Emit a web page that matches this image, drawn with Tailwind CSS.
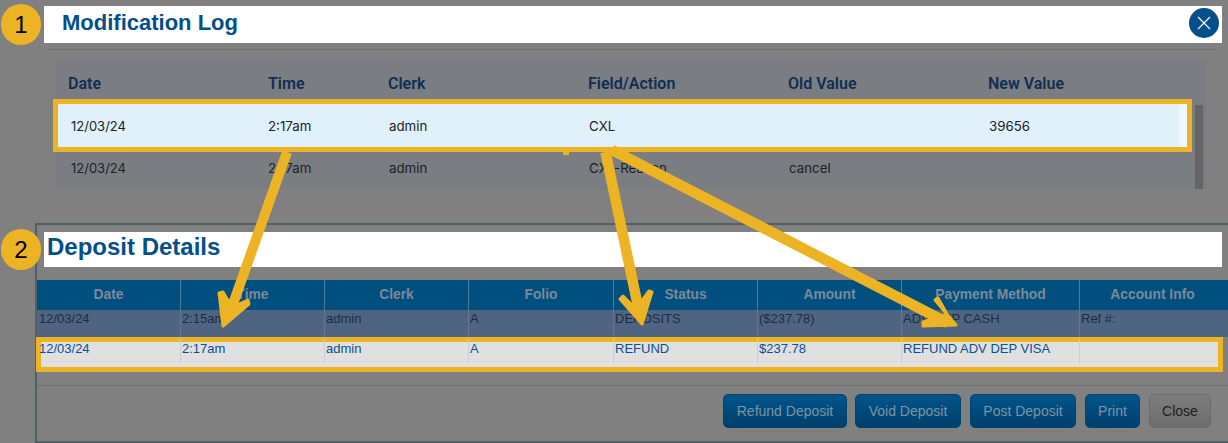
<!DOCTYPE html>
<html><head><meta charset="utf-8"><script src="https://cdn.jsdelivr.net/npm/@tailwindcss/browser@4"></script></head>
<body class="m-0">
<div class="relative w-[1228px] h-[443px] overflow-hidden bg-[#808080] font-['Liberation_Sans',Arial,sans-serif]">
  <!-- Modification log -->
  <div class="pt-[6px] pl-[44px] pr-[6px]">
    <div class="h-[37px] bg-white pl-[18px] flex items-center">
      <h1 class="text-[22px] leading-[32px] font-bold text-[#024f8a] pb-[4px]">Modification Log</h1>
    </div>
  </div>
  <div class="mt-[6px] ml-[47px] mr-[11px] h-px bg-[#6e6e6e]"></div>
  <div class="mt-[9px] ml-[57px] w-[1149px] h-[130px] bg-[#7a7e82] flex font-['Inter',sans-serif]">
    <div class="w-[1138px] shrink-0">
      <div class="h-[40px] pl-[11px] grid grid-cols-[200px_120px_200px_200px_200px_1fr] items-center pt-[10px] text-[16px] font-semibold text-[#0f2f52] font-['Roboto',sans-serif]">
        <span>Date</span><span>Time</span><span>Clerk</span><span>Field/Action</span><span>Old Value</span><span>New Value</span>
      </div>
      <div class="-ml-[4px] w-[1139px] h-[53px] border-[5px] border-[#ecb424] bg-[#e0f1fc] flex">
        <div class="w-[1121px] pl-[13px] pt-[2px] grid grid-cols-[197px_121px_200px_200px_200px_1fr] items-center text-[13.3px] text-[#1d2126]">
          <span class="text-[13px]">12/03/24</span><span>2:17am</span><span>admin</span><span>CXL</span><span></span><span>39656</span>
        </div>
        <div class="flex-1 bg-[#f0f8fd]"></div>
      </div>
      <div class="h-[37px] pl-[14px] pb-[3px] grid grid-cols-[197px_121px_200px_200px_200px_1fr] items-center text-[13.3px] text-[#1d2126]">
        <span class="text-[13px]">12/03/24</span><span>2:17am</span><span>admin</span><span>CXL-Reason</span><span>cancel</span><span></span>
      </div>
    </div>
    <div class="mt-[46px] w-[8px] h-[84px] bg-[#656565]"></div>
  </div>

  <!-- Deposit details -->
  <div class="mt-[34px] ml-[35px] w-[1200px] h-[220px] border-2 border-[#4f6068]">
    <div class="mt-[7px] ml-[7px] w-[1178px] h-[35px] bg-white pl-[3px] flex items-center">
      <h2 class="text-[24px] leading-[32px] font-bold text-[#024f8a] pb-[6px]">Deposit Details</h2>
    </div>
    <div class="mt-[13px] text-[13px]">
      <div class="h-[30px] bg-[#004f7f] text-[#7b8a99] text-[13.8px] font-bold grid grid-cols-[144px_144px_144px_145px_144px_144px_178px_145px_4px] text-center leading-[30px]">
        <span class="border-r border-[#4e7a99]">Date</span><span class="border-r border-[#4e7a99]">Time</span><span class="border-r border-[#4e7a99]">Clerk</span><span class="border-r border-[#4e7a99]">Folio</span><span class="border-r border-[#4e7a99]">Status</span><span class="border-r border-[#4e7a99]">Amount</span><span class="border-r border-[#4e7a99]">Payment Method</span><span>Account Info</span>
      </div>
      <div class="h-[27px] bg-[#4f6480] text-[#1d2c46] leading-[18px] grid grid-cols-[144px_144px_144px_145px_144px_144px_178px_149px]">
        <span class="pl-[2px] border-r border-[#66788f]">12/03/24</span><span class="pl-[1px] border-r border-[#66788f]">2:15am</span><span class="pl-[1px] border-r border-[#66788f]">admin</span><span class="pl-[1px] border-r border-[#66788f]">A</span><span class="pl-[1px] border-r border-[#66788f]">DEPOSITS</span><span class="pl-[1px] border-r border-[#66788f]">($237.78)</span><span class="pl-[1px] border-r border-[#66788f]">ADV DEP CASH</span><span class="pl-[1px]">Ref #:</span>
      </div>
      <div class="-ml-px w-[1187px] h-[35px] border-[5px] border-[#ecb424] bg-[#e0e0e0] text-[#0a4f99]">
        <div class="h-[25px] -ml-[5px] -mt-[3px] grid grid-cols-[145px_144px_144px_145px_144px_144px_178px_149px]">
          <span class="pl-[7px] border-r border-[#cfcfcf]"><span class="-ml-[4px] block">12/03/24</span></span><span class="pl-[1px] border-r border-[#cfcfcf]">2:17am</span><span class="pl-[1px] border-r border-[#cfcfcf]">admin</span><span class="pl-[1px] border-r border-[#cfcfcf]">A</span><span class="pl-[1px] border-r border-[#cfcfcf]">REFUND</span><span class="pl-[1px] border-r border-[#cfcfcf]">$237.78</span><span class="pl-[1px] border-r border-[#cfcfcf]">REFUND ADV DEP VISA</span><span></span>
        </div>
      </div>
    </div>
    <div class="mt-[13px] h-px bg-[#6f6f6f]"></div>
    <div class="mt-[8px] w-[1174px] flex justify-end gap-[9px] text-[14px]">
      <button class="h-[34px] w-[124px] rounded-[5px] border border-[#004470] bg-gradient-to-b from-[#00558c] to-[#003f6c] text-[#7e93a5]">Refund Deposit</button>
      <button class="-ml-px h-[34px] w-[106px] rounded-[5px] border border-[#004470] bg-gradient-to-b from-[#00558c] to-[#003f6c] text-[#7e93a5]">Void Deposit</button>
      <button class="h-[34px] w-[106px] rounded-[5px] border border-[#004470] bg-gradient-to-b from-[#00558c] to-[#003f6c] text-[#7e93a5]">Post Deposit</button>
      <button class="h-[34px] w-[55px] rounded-[5px] border border-[#004470] bg-gradient-to-b from-[#00558c] to-[#003f6c] text-[#7e93a5]">Print</button>
      <button class="h-[34px] w-[62px] rounded-[5px] border border-[#6b6b6b] bg-gradient-to-b from-[#7c7c7c] to-[#6e6e6e] text-[#1e1e1e]">Close</button>
    </div>
  </div>

  <!-- Overlays -->
  <div class="absolute left-[1px] top-[4px] w-[40px] h-[41px] rounded-full bg-[#ecb424] flex items-center justify-center text-[24px] text-black">1</div>
  <div class="absolute left-[1px] top-[229px] w-[40px] h-[41px] rounded-full bg-[#ecb424] flex items-center justify-center text-[24px] text-black">2</div>
  <div class="absolute left-[1189px] top-[8px] w-[30px] h-[30px] rounded-full bg-[#024f8a] flex items-center justify-center">
    <svg width="14" height="14" viewBox="0 0 14 14" fill="none" stroke="#fff" stroke-width="1.2"><path d="M1 1l12 12M13 1L1 13"/></svg>
  </div>
  <svg class="absolute inset-0" width="1228" height="443" viewBox="0 0 1228 443" fill="#ecb424" stroke="#ecb424" stroke-linejoin="round">
    <path d="M563 152h6v3h-6z" stroke="none"/>
    <path d="M287 152 L228 318" stroke-width="10" fill="none"/>
    <path d="M223 326 L219 293 L223 292 L232 307 L248 300 L249 304 Z" stroke-width="3"/>
    <path d="M605.5 152 L640 316" stroke-width="10.5" fill="none"/>
    <path d="M642 324 L620 299 L623 296 L636 309 L649 291 L652 292 Z" stroke-width="3"/>
    <path d="M612 150 L948 323" stroke-width="10.5" fill="none"/>
    <path d="M956 325 L935 300 L938 298 L947 314 L923 322 L923 326 Z" stroke-width="3"/>
  </svg>
</div>
</body></html>
